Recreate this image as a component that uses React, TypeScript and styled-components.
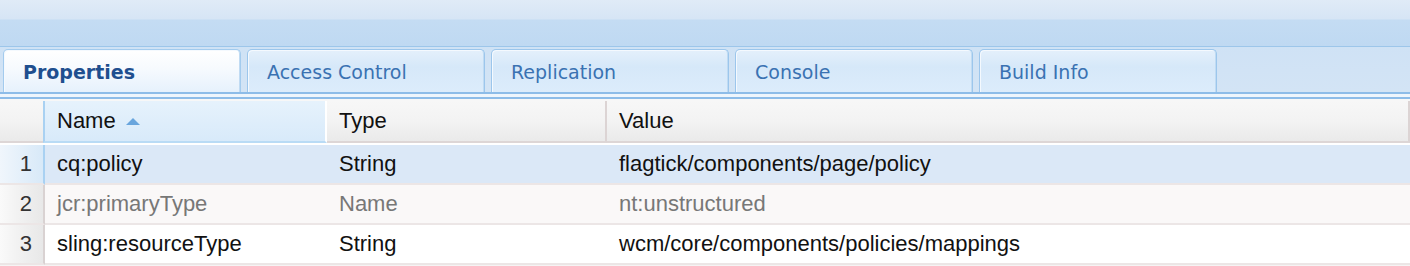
import React from 'react';
import styled, { createGlobalStyle } from 'styled-components';

const GlobalStyle = createGlobalStyle`
  html, body {
    margin: 0;
    padding: 0;
    background: #ffffff;
  }
  body {
    width: 1410px;
    height: 266px;
    overflow: hidden;
    background: #f5f4f4;
  }
`;

const Panel = styled.div`
  display: flex;
  flex-direction: column;
  width: 1410px;
`;

const TopBar = styled.div`
  height: 46px;
  background: linear-gradient(to bottom, #e0ebf7 0px, #d6e5f5 19px, #c4dcf3 20px, #bfd9f2 46px);
  border-bottom: 1px solid #9dc6ea;
`;

const TabStrip = styled.div`
  display: flex;
  gap: 6px;
  align-items: flex-end;
  height: 45px;
  padding-left: 3px;
  background: linear-gradient(to bottom, #cfe2f5, #d3e4f5);
  border-bottom: 2px solid #8dbce8;
`;

const Tab = styled.div<{ $active?: boolean }>`
  display: flex;
  align-items: center;
  box-sizing: border-box;
  width: 238px;
  height: 43px;
  padding-left: 19px;
  padding-top: 2px;
  border: 1px solid ${(p) => (p.$active ? '#a3cbee' : '#9cc6ec')};
  border-bottom: none;
  border-radius: 5px 5px 0 0;
  box-shadow: inset 1px 1px 0 #f4f9fe, inset -1px 0 0 #c0dbf3;
  background: ${(p) =>
    p.$active
      ? 'linear-gradient(to bottom, #ffffff 0%, #f6fafe 45%, #e6f1fc 100%)'
      : 'linear-gradient(to bottom, #e4f0fb 0%, #d6e8f9 40%, #dcecfb 100%)'};
  font-family: Tahoma, 'DejaVu Sans', sans-serif;
  font-size: 19px;
  font-weight: ${(p) => (p.$active ? 700 : 400)};
  color: ${(p) => (p.$active ? '#1f4f8f' : '#3a72b2')};
`;

const Spacer = styled.div`
  height: 3px;
  background: #eef5fc;
  border-bottom: 2px solid #8dbce8;
`;

const Grid = styled.div`
  display: grid;
  grid-template-columns: 45px 282px 280px 1fr;
  font-family: Helvetica, 'Liberation Sans', Arial, sans-serif;
  font-size: 22px;
  color: #111111;
  background: #f7f7f7;
`;

const HeadCell = styled.div<{ $sorted?: boolean; $first?: boolean }>`
  display: flex;
  align-items: center;
  gap: 10px;
  height: 40px;
  margin-top: 2px;
  padding-left: ${(p) => (p.$first ? '0' : '12px')};
  border-right: 2px solid ${(p) => (p.$sorted ? '#ffffff' : '#dcd4d4')};
  border-left: ${(p) => (p.$sorted ? '2px solid #a9d1f2' : 'none')};
  border-bottom: 2px solid ${(p) => (p.$sorted ? '#b9dbf5' : '#ddd6d6')};
  background: ${(p) =>
    p.$sorted
      ? 'linear-gradient(to bottom, #e6f2fc, #d8eafa)'
      : 'linear-gradient(to bottom, #f7f7f7 0%, #f3f3f3 50%, #eaeaea 100%)'};
  margin-left: ${(p) => (p.$sorted ? '-2px' : '0')};
`;

const SortArrow = styled.span`
  width: 0;
  height: 0;
  border-left: 7px solid transparent;
  border-right: 7px solid transparent;
  border-bottom: 7px solid #69a5dd;
  margin-top: 1px;
`;

const RowGap = styled.div`
  grid-column: 1 / -1;
  height: 2px;
  background: #ffffff;
`;

const NumCell = styled.div<{ $selected?: boolean }>`
  display: flex;
  align-items: center;
  justify-content: flex-end;
  padding-right: 11px;
  height: 38px;
  border-right: 2px solid ${(p) => (p.$selected ? '#a9d1f2' : '#d9d2d2')};
  border-bottom: 2px solid #ece6e6;
  color: #333333;
  background: ${(p) =>
    p.$selected
      ? 'linear-gradient(to right, #f0f6fc, #d8e9f8)'
      : 'linear-gradient(to right, #fafafa 0%, #f2f2f2 40%, #e8e8e8 100%)'};
`;

const Cell = styled.div<{ $tone: 'selected' | 'muted' | 'plain' }>`
  display: flex;
  align-items: center;
  padding-left: 12px;
  height: 38px;
  border-bottom: 2px solid #ece6e6;
  white-space: nowrap;
  color: ${(p) => (p.$tone === 'muted' ? '#777777' : '#111111')};
  background: ${(p) =>
    p.$tone === 'selected' ? '#dbe8f7' : p.$tone === 'muted' ? '#faf8f8' : '#ffffff'};
`;

type Row = { name: string; type: string; value: string; tone: 'selected' | 'muted' | 'plain' };

const rows: Row[] = [
  { name: 'cq:policy', type: 'String', value: 'flagtick/components/page/policy', tone: 'selected' },
  { name: 'jcr:primaryType', type: 'Name', value: 'nt:unstructured', tone: 'muted' },
  { name: 'sling:resourceType', type: 'String', value: 'wcm/core/components/policies/mappings', tone: 'plain' },
];

const tabs = ['Properties', 'Access Control', 'Replication', 'Console', 'Build Info'];

export default function App() {
  return (
    <>
      <GlobalStyle />
      <Panel>
        <TopBar />
        <TabStrip>
          {tabs.map((t, i) => (
            <Tab key={t} $active={i === 0}>
              {t}
            </Tab>
          ))}
        </TabStrip>
        <Spacer />
        <Grid>
          <HeadCell $first />
          <HeadCell $sorted>
            Name <SortArrow />
          </HeadCell>
          <HeadCell>Type</HeadCell>
          <HeadCell>Value</HeadCell>
          <RowGap />
          {rows.map((r, i) => (
            <React.Fragment key={r.name}>
              <NumCell $selected={r.tone === 'selected'}>{i + 1}</NumCell>
              <Cell $tone={r.tone}>{r.name}</Cell>
              <Cell $tone={r.tone}>{r.type}</Cell>
              <Cell $tone={r.tone}>{r.value}</Cell>
            </React.Fragment>
          ))}
        </Grid>
      </Panel>
    </>
  );
}
